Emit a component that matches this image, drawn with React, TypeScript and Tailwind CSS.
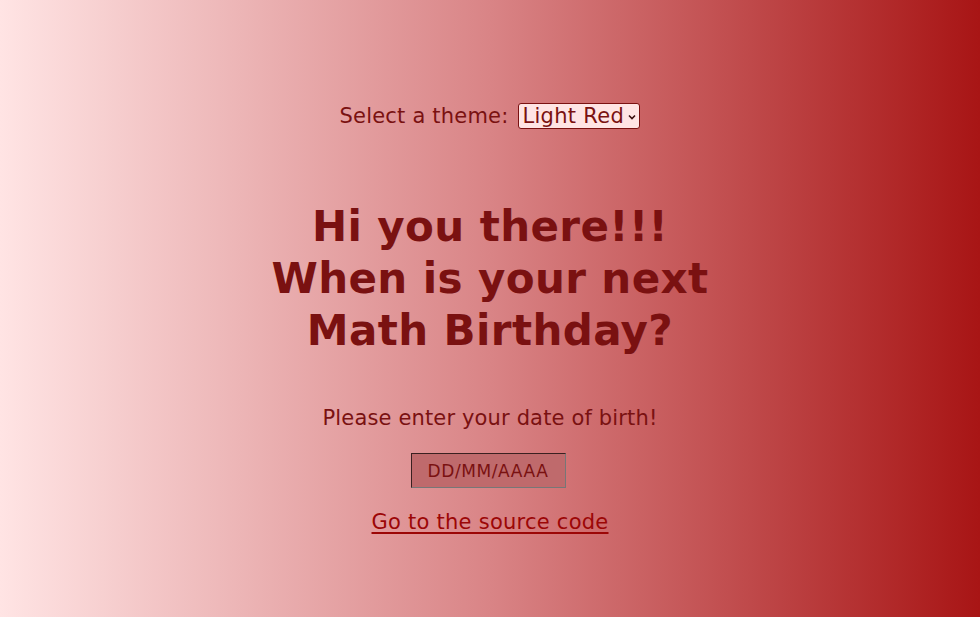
import React from "react";

export default function App() {
  return (
    <div
      className="w-full h-[617px] flex flex-col items-center text-[#7a1111] bg-[linear-gradient(to_right,#ffe4e4_0%,#d98486_50%,#a81515_100%)]"
      style={{ fontFamily: '"DejaVu Sans", Verdana, sans-serif' }}
    >
      <div className="mt-[103px] flex items-center text-[21px] leading-[26px] tracking-[0.2px]">
        <span>Select a theme:</span>
        <div className="relative ml-[10px]">
          <select
            defaultValue="Light Red"
            className="appearance-none bg-[#ffe4e4] border border-[#7a1111] rounded-[3px] text-[#7a1111] text-[21px] leading-[22px] tracking-[0.3px] pl-[3px] pr-[15px] h-[26px] outline-none"
            style={{ fontFamily: '"DejaVu Sans", Verdana, sans-serif' }}
          >
            <option>Light Red</option>
            <option>Dark Red</option>
          </select>
          <svg
            className="absolute right-[4px] top-[11px] pointer-events-none"
            width="8"
            height="6"
            viewBox="0 0 8 6"
          >
            <path d="M1 1.5 L4 4.5 L7 1.5" fill="none" stroke="#3a1010" strokeWidth="1.6" />
          </svg>
        </div>
      </div>

      <h1 className="mt-[72px] text-center font-bold text-[42px] leading-[52px] tracking-[0.4px]">
        Hi you there!!!
        <br />
        When is your next
        <br />
        Math Birthday?
      </h1>

      <p className="mt-[48px] text-[21px] leading-[26px] tracking-[0.15px]">
        Please enter your date of birth!
      </p>

      <input
        type="text"
        placeholder="DD/MM/AAAA"
        className="mt-[22px] ml-[-4px] w-[155px] h-[35px] bg-[#bf6a6c] border border-t-[#3a2020] border-l-[#3a2020] border-b-[#777] border-r-[#777] text-center text-[17px] tracking-[0.6px] text-[#7a1111] placeholder:text-[#7a1111] outline-none"
        style={{ fontFamily: '"DejaVu Sans", Verdana, sans-serif' }}
      />

      <a
        href="#"
        className="mt-[21px] text-[21px] leading-[26px] tracking-[0.25px] text-[#9c0606] underline decoration-2 underline-offset-[3px]"
      >
        Go to the source code
      </a>
    </div>
  );
}
